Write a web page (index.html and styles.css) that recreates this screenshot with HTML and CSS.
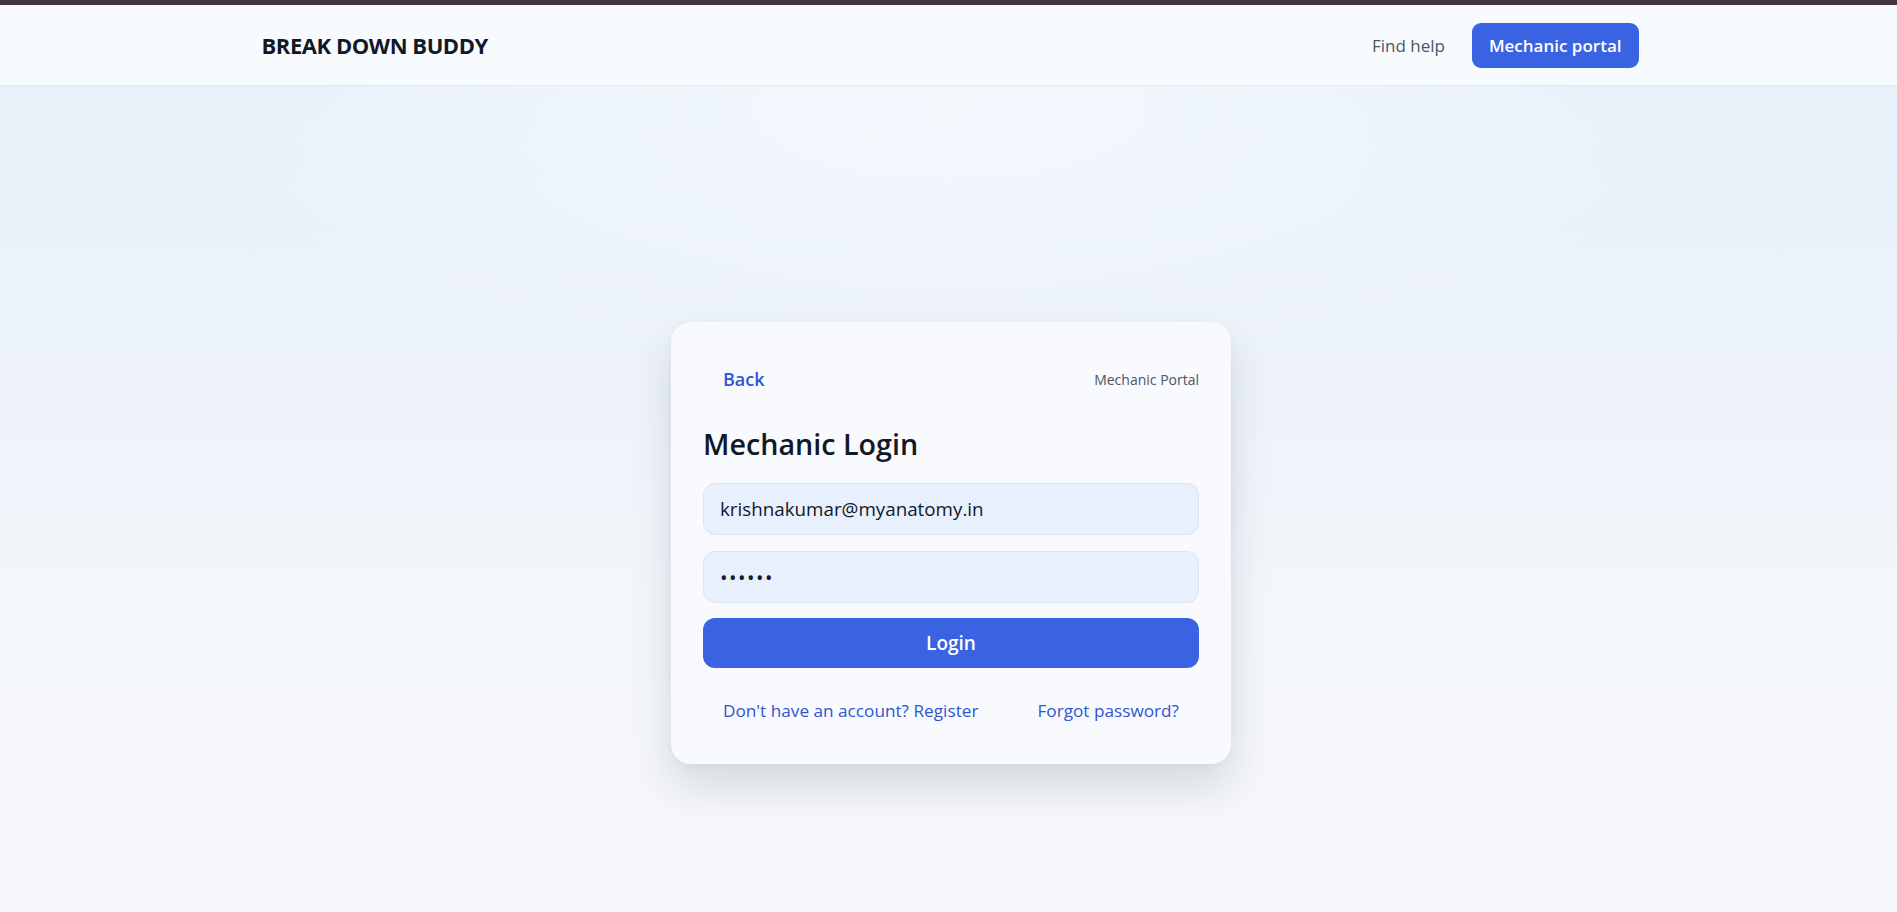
FILE: index.html
```html
<!DOCTYPE html>
<html lang="en">
<head>
<meta charset="utf-8">
<title>Break Down Buddy – Mechanic Login</title>
<link rel="stylesheet" href="styles.css">
</head>
<body>
<div class="topbar"></div>
<header class="site-header">
  <div class="header-inner">
    <div class="logo">BREAK DOWN BUDDY</div>
    <nav class="nav">
      <a class="nav-link" href="#">Find help</a>
      <a class="nav-btn" href="#">Mechanic portal</a>
    </nav>
  </div>
</header>
<main class="main">
  <section class="card">
    <div class="card-top">
      <a class="back" href="#">Back</a>
      <span class="portal-tag">Mechanic Portal</span>
    </div>
    <h1 class="title">Mechanic Login</h1>
    <form class="form">
      <input class="field" type="email" value="krishnakumar@myanatomy.in">
      <input class="field field-pass" type="password" value="123456">
      <button class="submit" type="button">Login</button>
    </form>
    <div class="links">
      <a class="link" href="#">Don't have an account? Register</a>
      <a class="link" href="#">Forgot password?</a>
    </div>
  </section>
</main>
</body>
</html>
```
FILE: styles.css
```css
* { box-sizing: border-box; }
html, body { margin: 0; padding: 0; }
body {
  font-family: "Open Sans", "Noto Sans", sans-serif;
  color: #111827;
  overflow: hidden;
  height: 100vh;
  background:
    radial-gradient(ellipse 40% 30% at 50% 12%, rgba(245,249,254,0.9), rgba(245,249,254,0) 100%),
    linear-gradient(180deg, #e5f0f9 0%, #ecf2fa 35%, #f3f6fa 65%, #f6f7fa 100%);
}
a { text-decoration: none; }
.topbar { height: 5px; background: #463640; }
.site-header {
  height: 81px;
  background: #f8fbfe;
  border-bottom: 1px solid #e3e8ee;
}
.header-inner {
  width: 1380px;
  margin: 0 auto;
  padding-left: 3px;
  height: 100%;
  display: flex;
  align-items: center;
  justify-content: space-between;
}
.logo { font-size: 22px; font-weight: 700; color: #111827; letter-spacing: -0.45px; }
.nav { display: flex; align-items: center; gap: 27px; }
.nav-link { font-size: 17px; font-weight: 500; color: #4b5563; }
.nav-btn {
  display: flex; align-items: center;
  height: 45px; padding: 0 17px;
  background: #3a63e3; color: #fff;
  border-radius: 9px;
  font-size: 17px; font-weight: 600;
}
.main {
  height: calc(100vh - 86px);
  padding: 236px 0 0 5px;
  display: flex;
  align-items: flex-start;
  justify-content: center;
}
.card {
  width: 560px;
  padding: 32px;
  background: #f8fafd;
  border-radius: 20px;
  box-shadow: 0 22px 42px rgba(30, 41, 59, 0.14), 0 2px 6px rgba(30, 41, 59, 0.04);
}
.card-top {
  height: 50px;
  display: flex; align-items: center; justify-content: space-between;
}
.back { padding: 8px 20px; font-size: 18px; font-weight: 600; color: #2f55d4; }
.portal-tag { font-size: 14px; color: #4b5563; }
.title { margin: 21px 0 20px; font-size: 28.7px; font-weight: 600; line-height: 38px; color: #111827; }
.form { display: flex; flex-direction: column; gap: 16px; }
.field {
  height: 52px; width: 100%;
  padding: 0 16px;
  border: 1px solid #dbe4f0;
  border-radius: 12px;
  background: #e8f0fe;
  font-family: inherit; font-size: 18.8px; color: #111827;
  outline: none;
}
.field-pass { letter-spacing: 1.5px; font-size: 20px; }
.submit {
  height: 50px; width: 100%;
  border: 0; border-radius: 12px;
  background: #3a63e3; color: #fff;
  font-family: inherit; font-size: 19px; font-weight: 600;
  margin-top: -1px;
}
.links {
  margin-top: 20px; height: 44px;
  display: flex; align-items: center; justify-content: space-between;
}
.link { padding: 0 20px; font-size: 17.2px; font-weight: 500; color: #2f55d4; }
```
